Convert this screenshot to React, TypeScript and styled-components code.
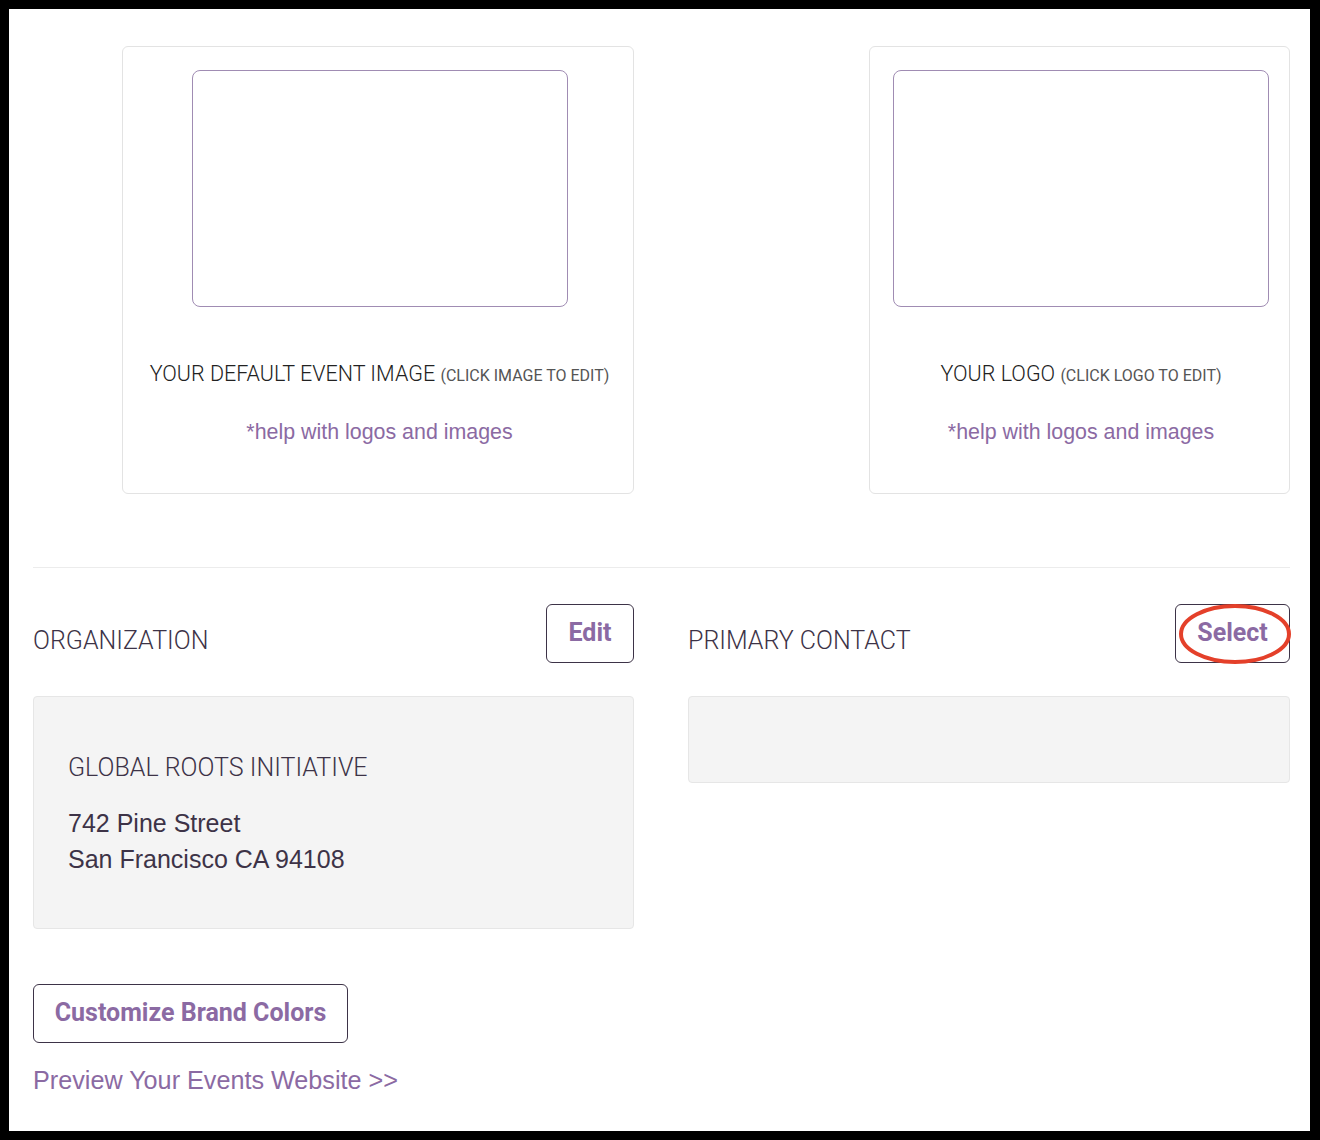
import styled, { createGlobalStyle } from 'styled-components';

const purple = '#8b6aa3';
const ink = '#3d3347';

const GlobalStyle = createGlobalStyle`
  html, body {
    margin: 0;
    padding: 0;
    background: #000;
  }
  * {
    box-sizing: border-box;
  }
`;

const Frame = styled.div`
  width: 1320px;
  height: 1140px;
  background: #fff;
  border-style: solid;
  border-color: #000;
  border-width: 9px 10px 9px 9px;
  padding: 37px 20px 0 24px;
  font-family: Roboto, 'Liberation Sans', Arial, sans-serif;
  color: ${ink};
`;

const Columns = styled.div`
  display: grid;
  grid-template-columns: 601px 602px;
  column-gap: 54px;
`;

const CardSlot = styled.div`
  display: flex;
  justify-content: flex-end;
`;

const Card = styled.div<{ $width: number }>`
  width: ${({ $width }) => $width}px;
  height: 448px;
  border: 1px solid #e3e3e3;
  border-radius: 6px;
  display: flex;
  flex-direction: column;
  align-items: center;
  padding: 23px 0 0 3px;
`;

const ImageBox = styled.div`
  width: 376px;
  height: 237px;
  border: 1px solid #a08cb3;
  border-radius: 8px;
  cursor: pointer;
`;

const CardTitle = styled.div`
  margin-top: 55px;
  font-size: 21.5px;
  line-height: 24px;
  font-weight: 300;
  color: #222;
  white-space: nowrap;
`;

const Hint = styled.span`
  font-size: 16px;
  color: #555;
  font-weight: 400;
`;

const HelpLink = styled.a`
  margin-top: 32px;
  font-family: 'Liberation Sans', Arial, sans-serif;
  font-size: 21.4px;
  line-height: 24px;
  color: ${purple};
  text-decoration: none;
`;

const Divider = styled.hr`
  margin: 73px 0 36px;
  border: none;
  border-top: 1px solid #ececec;
`;

const Section = styled.div`
  display: flex;
  flex-direction: column;
`;

const SectionHeader = styled.div`
  display: flex;
  justify-content: space-between;
  align-items: flex-start;
  height: 59px;
`;

const Heading = styled.h2`
  margin: 23px 0 0;
  font-size: 25px;
  line-height: 28px;
  font-weight: 300;
  color: ${ink};
`;

const OutlineButton = styled.button<{ $width: number }>`
  position: relative;
  width: ${({ $width }) => $width}px;
  height: 59px;
  background: #fff;
  border: 1px solid ${ink};
  border-radius: 6px;
  font-family: Roboto, 'Liberation Sans', Arial, sans-serif;
  font-size: 25px;
  font-weight: 700;
  color: ${purple};
  padding: 0 0 2px;
  cursor: pointer;
`;

const Annotation = styled.svg`
  position: absolute;
  left: -2px;
  top: -2px;
  width: 119px;
  height: 63px;
  overflow: visible;
  pointer-events: none;
`;

const InfoBox = styled.div<{ $height: number }>`
  margin-top: 33px;
  height: ${({ $height }) => $height}px;
  background: #f4f4f4;
  border: 1px solid #e6e6e6;
  border-radius: 4px;
  padding: 57px 34px 0;
`;

const OrgName = styled.div`
  font-size: 25px;
  line-height: 28px;
  font-weight: 300;
  color: ${ink};
`;

const Address = styled.div`
  margin-top: 23px;
  font-family: 'Liberation Sans', Arial, sans-serif;
  font-size: 25px;
  line-height: 36px;
  color: ${ink};
`;

const Footer = styled.div`
  margin-top: 55px;
  display: flex;
  flex-direction: column;
  align-items: flex-start;
`;

const PreviewLink = styled.a`
  margin-top: 23px;
  font-family: 'Liberation Sans', Arial, sans-serif;
  font-size: 25.2px;
  line-height: 28px;
  color: ${purple};
  text-decoration: none;
`;

export default function App() {
  return (
    <>
      <GlobalStyle />
      <Frame>
        <Columns>
          <CardSlot>
            <Card $width={512}>
              <ImageBox />
              <CardTitle>
                YOUR DEFAULT EVENT IMAGE <Hint>(CLICK IMAGE TO EDIT)</Hint>
              </CardTitle>
              <HelpLink href="#">*help with logos and images</HelpLink>
            </Card>
          </CardSlot>
          <CardSlot>
            <Card $width={421}>
              <ImageBox />
              <CardTitle>
                YOUR LOGO <Hint>(CLICK LOGO TO EDIT)</Hint>
              </CardTitle>
              <HelpLink href="#">*help with logos and images</HelpLink>
            </Card>
          </CardSlot>
        </Columns>

        <Divider />

        <Columns>
          <Section>
            <SectionHeader>
              <Heading>ORGANIZATION</Heading>
              <OutlineButton $width={88}>Edit</OutlineButton>
            </SectionHeader>
            <InfoBox $height={233}>
              <OrgName>GLOBAL ROOTS INITIATIVE</OrgName>
              <Address>
                742 Pine Street
                <br />
                San Francisco CA 94108
              </Address>
            </InfoBox>
          </Section>
          <Section>
            <SectionHeader>
              <Heading>PRIMARY CONTACT</Heading>
              <OutlineButton $width={115}>
                Select
                <Annotation viewBox="0 0 119 63">
                  <ellipse cx="61" cy="31" rx="54" ry="28" fill="none" stroke="#e4402a" strokeWidth="4" />
                </Annotation>
              </OutlineButton>
            </SectionHeader>
            <InfoBox $height={87} />
          </Section>
        </Columns>

        <Footer>
          <OutlineButton $width={315}>Customize Brand Colors</OutlineButton>
          <PreviewLink href="#">Preview Your Events Website &gt;&gt;</PreviewLink>
        </Footer>
      </Frame>
    </>
  );
}
